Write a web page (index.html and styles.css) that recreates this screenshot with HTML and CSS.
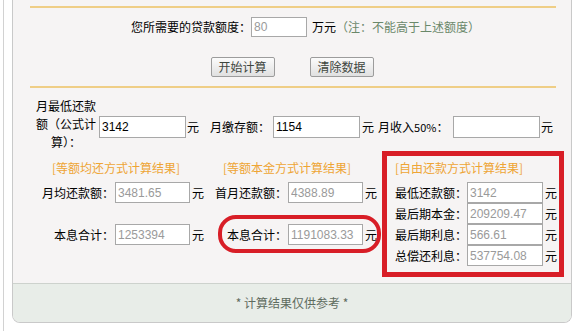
FILE: index.html
```html
<!DOCTYPE html>
<html lang="zh-CN">
<head>
<meta charset="utf-8">
<title>贷款计算</title>
<link rel="stylesheet" href="styles.css">
</head>
<body>
<div class="page">
  <div class="panel">
    <div class="rule"></div>
    <div class="amount-row">
      <span class="lbl">您所需要的贷款额度：</span>
      <input class="in in-amount" value="80" readonly>
      <span class="unit">万元</span><span class="note">（注：不能高于上述额度）</span>
    </div>
    <div class="btn-row">
      <button class="btn">开始计算</button>
      <button class="btn">清除数据</button>
    </div>
    <div class="rule rule2"></div>
    <div class="form-row">
      <span class="wrap-lbl">月最低还款额（公式计算）：</span>
      <input class="in in-form dark" value="3142">
      <span class="txt yuan-f">元</span>
      <span class="txt lbl-deposit">月缴存额：</span>
      <input class="in in-form dark in-deposit" value="1154">
      <span class="txt yuan-f2">元</span>
      <span class="txt lbl-income">月收入<span class="small">50%</span>：</span>
      <input class="in in-form dark" value="">
      <span class="txt yuan-f3">元</span>
    </div>
    <div class="results">
      <div class="col col1">
        <div class="head">[等额均还方式计算结果]</div>
        <div class="r"><span class="rl">月均还款额：</span><input class="in in-res" value="3481.65" readonly><span class="yuan">元</span></div>
        <div class="r r2"><span class="rl">本息合计：</span><input class="in in-res" value="1253394" readonly><span class="yuan">元</span></div>
      </div>
      <div class="col col2">
        <div class="head">[等额本金方式计算结果]</div>
        <div class="r"><span class="rl">首月还款额：</span><input class="in in-res" value="4388.89" readonly><span class="yuan">元</span></div>
        <div class="r r2"><span class="rl">本息合计：</span><input class="in in-res" value="1191083.33" readonly><span class="yuan">元</span></div>
        <div class="mark-oval"></div>
      </div>
      <div class="free">
        <div class="head">[自由还款方式计算结果]</div>
        <div class="fr first"><span class="fl">最低还款额：</span><input class="in in-free" value="3142" readonly><span class="yuan">元</span></div>
        <div class="fr"><span class="fl">最后期本金：</span><input class="in in-free" value="209209.47" readonly><span class="yuan">元</span></div>
        <div class="fr"><span class="fl">最后期利息：</span><input class="in in-free" value="566.61" readonly><span class="yuan">元</span></div>
        <div class="fr"><span class="fl">总偿还利息：</span><input class="in in-free" value="537754.08" readonly><span class="yuan">元</span></div>
      </div>
    </div>
    <div class="footer">* 计算结果仅供参考 *</div>
  </div>
</div>
</body>
</html>
```

FILE: styles.css
```css
html, body {
  margin: 0;
  padding: 0;
  background: #ffffff;
}
body {
  font-family: "Noto Sans CJK SC", "Liberation Sans", sans-serif;
  font-size: 12px;
  color: #000000;
}
.page {
  margin-left: 3px;
  border-left: 1px solid #d2d2d2;
  padding: 0 0 8px 8px;
  width: 570px;
}
.panel {
  width: 560px;
  box-sizing: border-box;
  border: 1px solid #c9c9c9;
  border-top: 0;
  border-radius: 0 0 8px 8px;
  background: #f6f4f4;
  overflow: hidden;
}
.rule {
  height: 2px;
  background: #efce86;
  margin: 6px 15px 0 17px;
}
.rule2 {
  margin-top: 9px;
}
.in {
  flex-shrink: 0;
  box-sizing: border-box;
  border: 1px solid #a8a8a8;
  background: #ffffff;
  font-family: "Liberation Sans", Arial, sans-serif;
  font-size: 12px;
  color: #9a9a9a;
  padding: 0 0 0 2px;
  margin: 0;
  outline: none;
}
.dark {
  color: #000000;
}
.amount-row {
  display: flex;
  align-items: center;
  height: 20px;
  margin-top: 9px;
  padding-left: 118px;
  line-height: 20px;
}
.in-amount {
  width: 56px;
  height: 20px;
}
.unit {
  margin-left: 5px;
}
.note {
  color: #6a886a;
}
.btn-row {
  display: flex;
  justify-content: center;
  gap: 35px;
  margin-top: 20px;
}
.btn {
  width: 64px;
  height: 20px;
  box-sizing: border-box;
  border: 1px solid #9c9c9c;
  border-radius: 2px;
  background: linear-gradient(#fbfbfb, #e0e0e0);
  font-family: "Noto Sans CJK SC", sans-serif;
  font-size: 12px;
  color: #3e463e;
  padding: 0;
  line-height: 18px;
}
.form-row {
  display: flex;
  align-items: flex-start;
  margin-top: 9px;
  padding-left: 22px;
}
.wrap-lbl {
  flex-shrink: 0;
  width: 62px;
  line-height: 18px;
  text-align: center;
}
.in-form {
  width: 87px;
  height: 22px;
  margin-top: 19px;
  margin-left: 2px;
}
.txt {
  flex-shrink: 0;
  line-height: 22px;
  margin-top: 19px;
}
.yuan-f {
  margin-left: 1px;
}
.lbl-deposit {
  margin-left: 11px;
  width: 61px;
}
.in-deposit {
  margin-left: 2px;
}
.yuan-f2 {
  margin-left: 2px;
}
.lbl-income {
  margin-left: 4px;
  width: 73px;
}
.small {
  font-size: 11px;
}
.yuan-f3 {
  margin-left: 1px;
}
.results {
  display: flex;
  padding-left: 29px;
}
.col {
  position: relative;
  flex-shrink: 0;
  width: 162px;
  padding-top: 8px;
}
.col1 {
  margin-right: 11px;
}
.col2 {
  margin-right: 5px;
}
.head {
  color: #eea535;
  line-height: 18px;
  height: 18px;
  white-space: nowrap;
}
.col1 .head {
  padding-left: 10px;
}
.col2 .head {
  padding-left: 8px;
}
.r {
  display: flex;
  align-items: center;
  height: 21px;
  margin-top: 5px;
}
.r2 {
  margin-top: 21px;
}
.rl {
  flex-shrink: 0;
  width: 72px;
  text-align: right;
  white-space: nowrap;
}
.in-res {
  width: 75px;
  height: 21px;
  margin-left: 1px;
}
.yuan {
  flex-shrink: 0;
  margin-left: 2px;
}
.mark-oval {
  position: absolute;
  left: 3px;
  top: 64px;
  width: 163px;
  height: 38px;
  box-sizing: border-box;
  border: 4px solid #d81e27;
  border-radius: 18px;
}
.free {
  flex-shrink: 0;
  width: 182px;
  box-sizing: border-box;
  border: 5px solid #d81e27;
  padding: 3px 0 6px 8px;
}
.fr {
  display: flex;
  align-items: center;
  height: 21px;
}
.fr.first {
  margin-top: 5px;
}
.fl {
  flex-shrink: 0;
  width: 72px;
  white-space: nowrap;
}
.in-free {
  width: 76px;
  height: 21px;
}
.footer {
  margin-top: 6px;
  border-top: 1px solid #cdd2cd;
  background: #e8ede8;
  height: 38px;
  line-height: 38px;
  text-align: center;
  color: #5e6b5e;
}
```
